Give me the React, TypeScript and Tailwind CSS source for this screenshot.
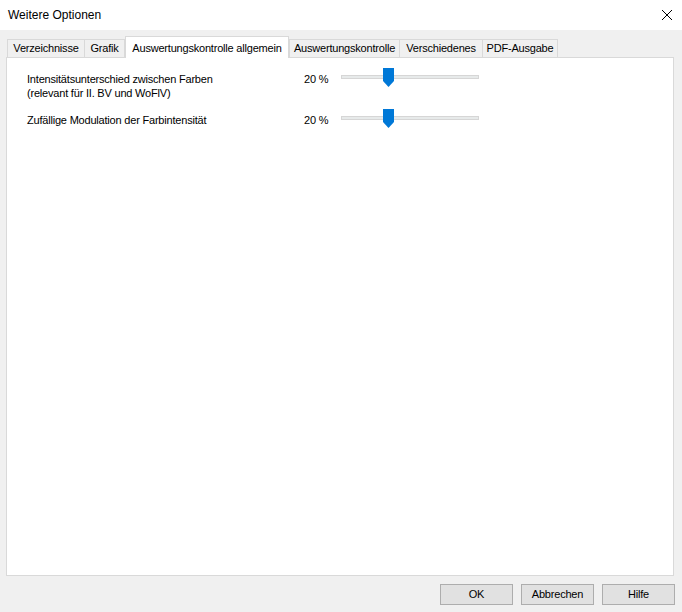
const font = { fontFamily: '"Liberation Sans", Arial, sans-serif' };

type Tab = { label: string; width: string; active?: boolean; overlap?: boolean };

// widths tuned so the tab edges land where the dialog draws them
const tabs: Tab[] = [
  { label: "Verzeichnisse", width: "w-[78px]" },
  { label: "Grafik", width: "w-[41px]", overlap: true },
  { label: "Auswertungskontrolle allgemein", width: "w-[164px]", active: true },
  { label: "Auswertungskontrolle", width: "w-[111px]" },
  { label: "Verschiedenes", width: "w-[84px]", overlap: true },
  { label: "PDF-Ausgabe", width: "w-[76px]", overlap: true },
];

function Slider() {
  return (
    <div className="relative h-[19px] w-[138px]">
      <div className="absolute left-0 right-0 top-[7px] h-[4px] border border-[#d6d6d6] bg-[#e7eaea]" />
      <svg
        className="absolute left-[42px] top-0"
        width="11"
        height="19"
        viewBox="0 0 11 19"
      >
        <path d="M0 0 H11 V13 L5.5 19 L0 13 Z" fill="#0078d7" />
      </svg>
    </div>
  );
}

function OptionRow({ lines }: { lines: string[] }) {
  return (
    <div className="flex items-start">
      <div className="w-[277px] pt-[4px] text-[11px] leading-[14px] tracking-[-0.2px] text-black">
        {lines.map((l) => (
          <div key={l}>{l}</div>
        ))}
      </div>
      <div className="w-[37px] pt-[4px] text-[11px] leading-[14px] tracking-[-0.2px] text-black">
        20 %
      </div>
      <Slider />
    </div>
  );
}

export default function App() {
  return (
    <div
      className="flex h-[612px] w-[682px] flex-col bg-[#f0f0f0] select-none"
      style={font}
    >
      <div className="flex h-[30px] items-center justify-between bg-white pl-[8px] pr-[9px]">
        <span className="text-[12px] text-black">Weitere Optionen</span>
        <svg width="12" height="12" viewBox="0 0 12 12">
          <path d="M1 1 L11 11 M11 1 L1 11" stroke="#000" strokeWidth="1" />
        </svg>
      </div>

      <div className="ml-[7px] mt-[6px] flex h-[21px] items-end">
        {tabs.map((t) =>
          t.active ? (
            <div
              key={t.label}
              className={`${t.width} relative z-10 -mb-px flex h-[22px] items-start justify-center border border-b-0 border-[#d9d9d9] bg-white pt-[3px] text-[11px] tracking-[-0.2px] text-black`}
            >
              {t.label}
            </div>
          ) : (
            <div
              key={t.label}
              className={`${t.width} ${t.overlap ? "-ml-px" : ""} flex h-[18px] items-center justify-center border border-b-0 border-[#d9d9d9] bg-[#f0f0f0] text-[11px] tracking-[-0.2px] text-black`}
            >
              {t.label}
            </div>
          )
        )}
      </div>

      <div className="ml-[6px] flex h-[519px] w-[668px] flex-col gap-[9px] border border-[#d9d9d9] bg-white pl-[20px] pt-[10px]">
        <OptionRow
          lines={[
            "Intensitätsunterschied zwischen Farben",
            "(relevant für II. BV und WoFlV)",
          ]}
        />
        <OptionRow lines={["Zufällige Modulation der Farbintensität"]} />
      </div>

      <div className="mt-[8px] flex justify-end gap-[8px] pr-[7px]">
        {["OK", "Abbrechen", "Hilfe"].map((b) => (
          <button
            key={b}
            className="h-[21px] w-[73px] border border-[#adadad] bg-[#e1e1e1] text-[11px] tracking-[-0.2px] text-black"
          >
            {b}
          </button>
        ))}
      </div>
    </div>
  );
}
